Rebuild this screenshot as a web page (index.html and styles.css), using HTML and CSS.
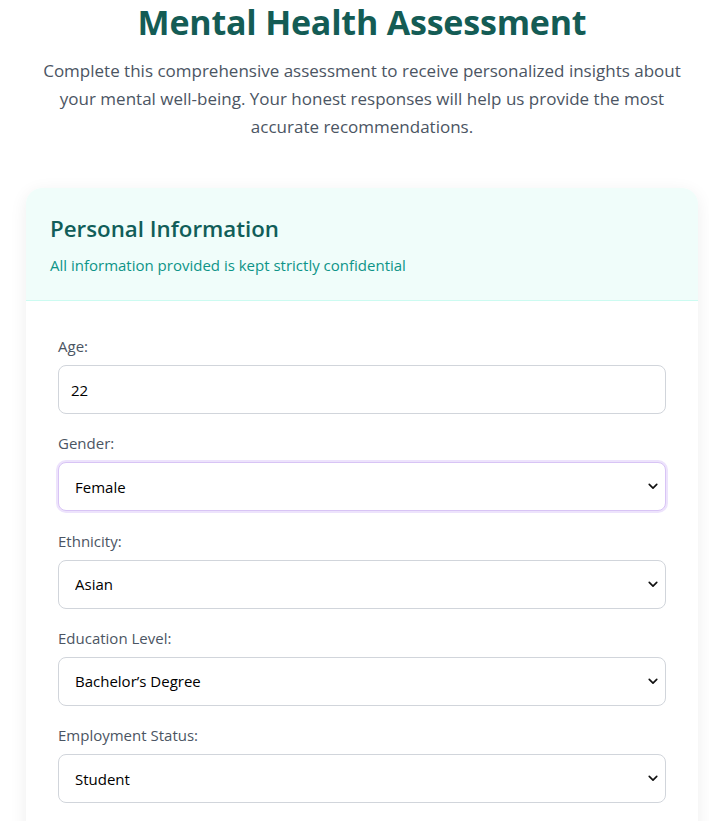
FILE: index.html
```html
<!DOCTYPE html>
<html lang="en">
<head>
<meta charset="utf-8">
<title>Mental Health Assessment</title>
<link rel="stylesheet" href="styles.css">
</head>
<body>
<main class="page">
  <header class="intro">
    <h1 class="title">Mental Health Assessment</h1>
    <p class="lead">Complete this comprehensive assessment to receive personalized insights about your mental well-being. Your honest responses will help us provide the most accurate recommendations.</p>
  </header>

  <section class="card">
    <div class="card-head">
      <h2 class="card-title">Personal Information</h2>
      <p class="card-sub">All information provided is kept strictly confidential</p>
    </div>
    <div class="card-body">
      <div class="field">
        <label class="label" for="age">Age:</label>
        <input class="control" id="age" type="text" value="22">
      </div>
      <div class="field">
        <label class="label" for="gender">Gender:</label>
        <div class="select-wrap">
          <select class="control select focused" id="gender"><option>Female</option></select>
          <svg class="chev" viewBox="0 0 12 8" width="12" height="8"><path d="M1.5 1.5 6 6l4.5-4.5" fill="none" stroke="#111" stroke-width="2" stroke-linecap="round" stroke-linejoin="round"/></svg>
        </div>
      </div>
      <div class="field">
        <label class="label" for="eth">Ethnicity:</label>
        <div class="select-wrap">
          <select class="control select" id="eth"><option>Asian</option></select>
          <svg class="chev" viewBox="0 0 12 8" width="12" height="8"><path d="M1.5 1.5 6 6l4.5-4.5" fill="none" stroke="#111" stroke-width="2" stroke-linecap="round" stroke-linejoin="round"/></svg>
        </div>
      </div>
      <div class="field">
        <label class="label" for="edu">Education Level:</label>
        <div class="select-wrap">
          <select class="control select" id="edu"><option>Bachelor’s Degree</option></select>
          <svg class="chev" viewBox="0 0 12 8" width="12" height="8"><path d="M1.5 1.5 6 6l4.5-4.5" fill="none" stroke="#111" stroke-width="2" stroke-linecap="round" stroke-linejoin="round"/></svg>
        </div>
      </div>
      <div class="field">
        <label class="label" for="emp">Employment Status:</label>
        <div class="select-wrap">
          <select class="control select" id="emp"><option>Student</option></select>
          <svg class="chev" viewBox="0 0 12 8" width="12" height="8"><path d="M1.5 1.5 6 6l4.5-4.5" fill="none" stroke="#111" stroke-width="2" stroke-linecap="round" stroke-linejoin="round"/></svg>
        </div>
      </div>
    </div>
  </section>
</main>
</body>
</html>
```

FILE: styles.css
```css
* { box-sizing: border-box; }
html, body { margin: 0; padding: 0; background: #ffffff; }
body {
  font-family: "Open Sans", "Noto Sans", "DejaVu Sans", sans-serif;
  color: #1f2937;
  overflow: hidden;
}
.page {
  padding: 0 11px 40px 26px;
}
.intro {
  text-align: center;
}
.title {
  margin: 0;
  font-size: 34px;
  line-height: 44px;
  font-weight: 700;
  color: #145c55;
  letter-spacing: -0.2px;
}
.lead {
  margin: 13px auto 0;
  max-width: 640px;
  font-size: 17px;
  line-height: 28px;
  color: #4b5563;
}
.card {
  margin-top: 47px;
  background: #ffffff;
  border-radius: 16px;
  box-shadow: 0 4px 18px rgba(0, 0, 0, 0.07);
  overflow: hidden;
}
.card-head {
  background: #f0fdfa;
  border-bottom: 1px solid #ccfbf1;
  padding: 25px 24px 24px;
}
.card-title {
  margin: 0;
  font-size: 22.3px;
  line-height: 32px;
  font-weight: 600;
  color: #115e59;
}
.card-sub {
  margin: 9px 0 0;
  font-size: 15px;
  line-height: 22px;
  color: #0d9488;
}
.card-body {
  padding: 34px 32px 60px;
  display: flex;
  flex-direction: column;
  gap: 18.25px;
}
.field {
  display: flex;
  flex-direction: column;
  gap: 8px;
}
.label {
  font-size: 15px;
  line-height: 22px;
  color: #4b5563;
}
.control {
  display: block;
  width: 100%;
  height: 49px;
  border: 1px solid #d1d5db;
  border-radius: 8px;
  background: #ffffff;
  font-family: inherit;
  font-size: 15px;
  color: #000000;
  padding: 0 12px;
  outline: none;
}
.select-wrap {
  position: relative;
}
.select {
  appearance: none;
  -webkit-appearance: none;
  padding: 0 40px 0 16px;
}
.focused {
  border: 1px solid #d8c4f5;
  box-shadow: 0 0 0 2px #ede3fc;
}
.chev {
  position: absolute;
  right: 8px;
  top: 21px;
  width: 10px;
  height: 7px;
  pointer-events: none;
}
```
